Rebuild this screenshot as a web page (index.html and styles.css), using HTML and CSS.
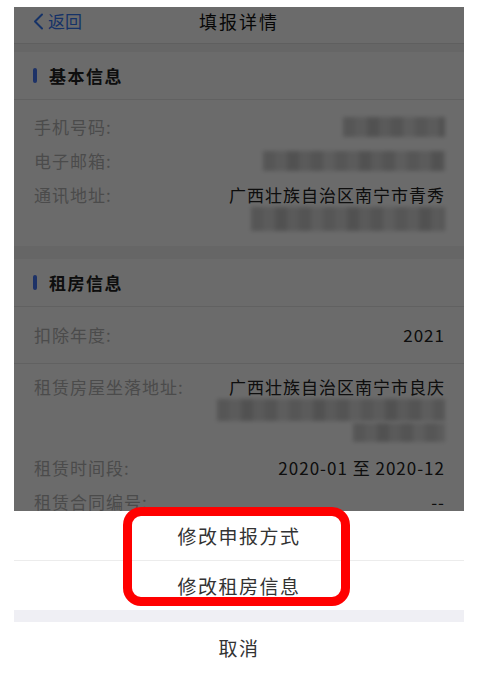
FILE: index.html
```html
<!DOCTYPE html>
<html>
<head>
<meta charset="utf-8">
<title>填报详情</title>
<link rel="stylesheet" href="styles.css">
</head>
<body>
<div class="screen">
    <div class="page">
        <div class="nav">
            <span class="back">
                <svg width="11" height="17" viewBox="0 0 11 17"><polyline points="9,1.5 2,8.5 9,15.5" fill="none" stroke="#3478f6" stroke-width="2" stroke-linecap="round" stroke-linejoin="round"/></svg>
                返回
            </span>
            <span class="title">填报详情</span>
        </div>

        <div class="gap"></div>
        <div class="section">
            <div class="sec-title"><i></i>基本信息</div>
            <div class="rows first">
                <div class="row"><span class="label">手机号码:</span><span class="mosaic m1"></span></div>
                <div class="row"><span class="label">电子邮箱:</span><span class="mosaic m2"></span></div>
                <div class="row">
                    <span class="label">通讯地址:</span>
                    <span class="value">广西壮族自治区南宁市青秀<span class="mosaic m3"></span></span>
                </div>
            </div>
        </div>

        <div class="gap wide"></div>
        <div class="section">
            <div class="sec-title"><i></i>租房信息</div>
            <div class="row tall"><span class="label">扣除年度:</span><span class="value">2021</span></div>
            <div class="rows second">
                <div class="row">
                    <span class="label">租赁房屋坐落地址:</span>
                    <span class="value">广西壮族自治区南宁市良庆<span class="mosaic m4"></span><span class="mosaic m5"></span></span>
                </div>
                <div class="row"><span class="label">租赁时间段:</span><span class="value">2020-01 至 2020-12</span></div>
                <div class="row"><span class="label">租赁合同编号:</span><span class="value">--</span></div>
            </div>
        </div>
    </div>

    <div class="sheet">
        <div class="option">修改申报方式</div>
        <div class="option">修改租房信息</div>
        <div class="sheet-gap"></div>
        <div class="option cancel">取消</div>
    </div>

    <div class="mark"></div>
</div>
</body>
</html>
```

FILE: styles.css
```css
/* 页面 */
body {
    margin: 0;
    background: #fff;
    font-family: "Noto Sans CJK SC", "Noto Sans", sans-serif;
    color: #222;
}

.screen {
    position: relative;
    width: 450px;
    margin: 7px 0 0 14px;
}

.page {
    position: relative;
    height: 504px;
    overflow: hidden;
    background: #fff;
}

/* 遮罩 */
.page::after {
    content: '';
    position: absolute;
    top: 0;
    left: 0;
    right: 0;
    bottom: 0;
    background: rgba(0, 0, 0, 0.58);
}

/* 导航 */
.nav {
    position: relative;
    height: 36px;
    border-bottom: 1px solid #e2e2e2;
    display: flex;
    justify-content: center;
}

.back {
    position: absolute;
    left: 19px;
    top: 2px;
    display: flex;
    align-items: center;
    gap: 4px;
    color: #3478f6;
    font-size: 17px;
    line-height: 24px;
}

.title {
    font-size: 18px;
    line-height: 28px;
    letter-spacing: 2px;
    color: #111;
}

.gap {
    height: 8px;
    background: #f2f2f2;
}

.gap.wide {
    height: 13px;
}

/* 分组 */
.sec-title {
    height: 47px;
    display: flex;
    align-items: center;
    padding-left: 19px;
    font-size: 17px;
    font-weight: bold;
    letter-spacing: 1.5px;
    border-bottom: 1px solid #e6e6e6;
}

.sec-title i {
    width: 4px;
    height: 15px;
    border-radius: 2px;
    background: #4677f5;
    margin-right: 12px;
}

.rows {
    padding: 10px 0 7px;
}

.rows.first {
    padding-bottom: 5px;
}

.rows.second {
    padding-top: 6px;
}

.row {
    display: flex;
    justify-content: space-between;
    align-items: flex-start;
    padding: 0 19px 0 20px;
    font-size: 17px;
    line-height: 34px;
    letter-spacing: 1px;
}

.row.tall {
    padding-top: 11px;
    padding-bottom: 11px;
    border-bottom: 1px solid #e6e6e6;
}

.label {
    color: #b4b4b4;
    white-space: nowrap;
}

.value {
    display: flex;
    flex-direction: column;
    align-items: flex-end;
    text-align: right;
    color: #222;
    white-space: nowrap;
}

/* 打码 */
.mosaic {
    display: block;
    filter: blur(2px);
    background: repeating-linear-gradient(90deg,
        #cdcdcd 0 12px, #dadada 12px 24px, #c2c2c2 24px 36px,
        #d6d6d6 36px 48px, #c8c8c8 48px 60px, #dedede 60px 72px);
}

.m1 { width: 102px; height: 20px; margin-top: 7px; }
.m2 { width: 182px; height: 20px; margin-top: 7px; }
.m3 { width: 194px; height: 24px; margin-top: -5px; margin-bottom: 10px; }
.m4 { width: 228px; height: 22px; margin-top: -5px; }
.m5 { width: 92px; height: 19px; margin-top: 2px; margin-bottom: 9px; }

/* 操作面板 */
.sheet {
    background: #fff;
}

.option {
    height: 49px;
    display: flex;
    align-items: center;
    justify-content: center;
    font-size: 19px;
    letter-spacing: 1.5px;
    color: #333;
}

.option:first-child {
    border-bottom: 1px solid #ececec;
}

.sheet-gap {
    height: 12px;
    background: #efeff4;
}

.cancel {
    height: 50px;
}

/* 红框标注 */
.mark {
    position: absolute;
    left: 109px;
    top: 500px;
    width: 209px;
    height: 81px;
    border: 9px solid #ff0000;
    border-radius: 18px;
}
```
